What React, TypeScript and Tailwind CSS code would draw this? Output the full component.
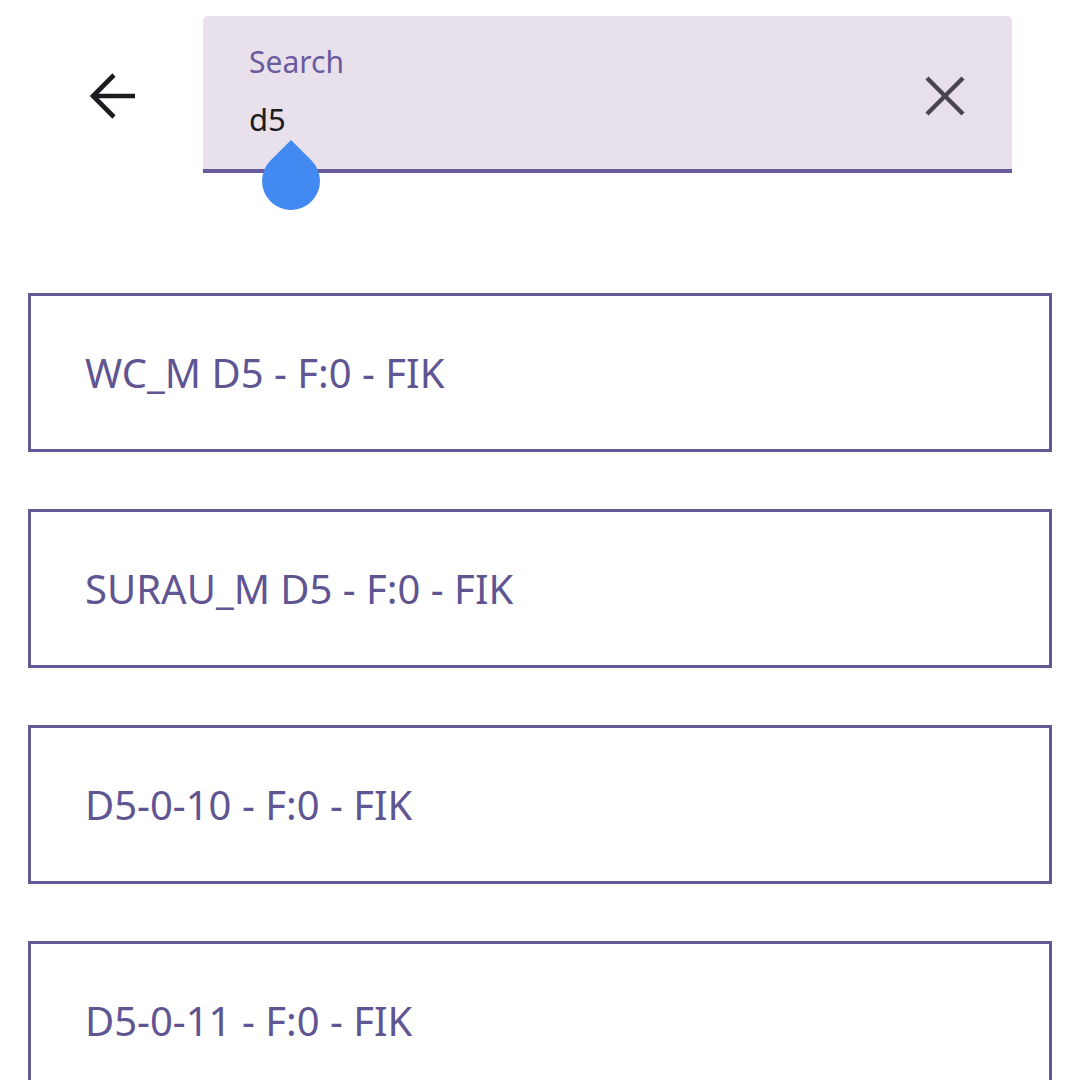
const RESULTS = [
  'WC_M D5 - F:0 - FIK',
  'SURAU_M D5 - F:0 - FIK',
  'D5-0-10 - F:0 - FIK',
  'D5-0-11 - F:0 - FIK',
];

function BackArrow() {
  return (
    <svg width="50" height="50" viewBox="0 0 50 50" fill="none">
      <path
        d="M47 25 H5 M26 4 L5 25 L26 46"
        stroke="#1d1b20"
        strokeWidth="4.6"
        strokeLinecap="butt"
        strokeLinejoin="miter"
      />
    </svg>
  );
}

function ClearIcon() {
  return (
    <svg width="40" height="40" viewBox="0 0 40 40" fill="none">
      <path d="M2 2 L38 38 M38 2 L2 38" stroke="#49454f" strokeWidth="4.4" />
    </svg>
  );
}

function CursorHandle() {
  return (
    <svg
      className="absolute left-[59px] top-[124px]"
      width="58"
      height="70"
      viewBox="0 0 58 70"
    >
      <path d="M29 0 L49.5 20.5 A29 29 0 1 1 8.5 20.5 Z" fill="#4289f1" />
    </svg>
  );
}

export default function App() {
  return (
    <div className="w-[1080px] h-[1080px] overflow-hidden bg-white font-['Noto_Sans',sans-serif]">
      <div className="flex items-start pt-[16px]">
        <div className="w-[203px] h-[157px] flex items-center pl-[88px] pt-[2px]">
          <BackArrow />
        </div>
        <div className="relative w-[809px] h-[157px] rounded-t-[5px] bg-[#e8e0eb] border-b-[4px] border-[#6a5b9d] flex items-start">
          <div className="flex-1 pl-[46px] pt-[28px]">
            <div className="text-[30px] leading-[36px] text-[#6a5a9e]">Search</div>
            <div className="text-[31px] leading-[36px] text-[#1d1b20] mt-[21px]">d5</div>
          </div>
          <div className="w-[134px] h-[153px] flex items-center justify-center pt-[6px]">
            <ClearIcon />
          </div>
          <CursorHandle />
        </div>
      </div>

      <div className="flex flex-col gap-[57px] px-[28px] pt-[120px]">
        {RESULTS.map((r) => (
          <div
            key={r}
            className="h-[159px] border-[3px] border-[#635a95] flex items-center pl-[54px]"
          >
            <span className="text-[40px] text-[#5f5593]">{r}</span>
          </div>
        ))}
      </div>
    </div>
  );
}
